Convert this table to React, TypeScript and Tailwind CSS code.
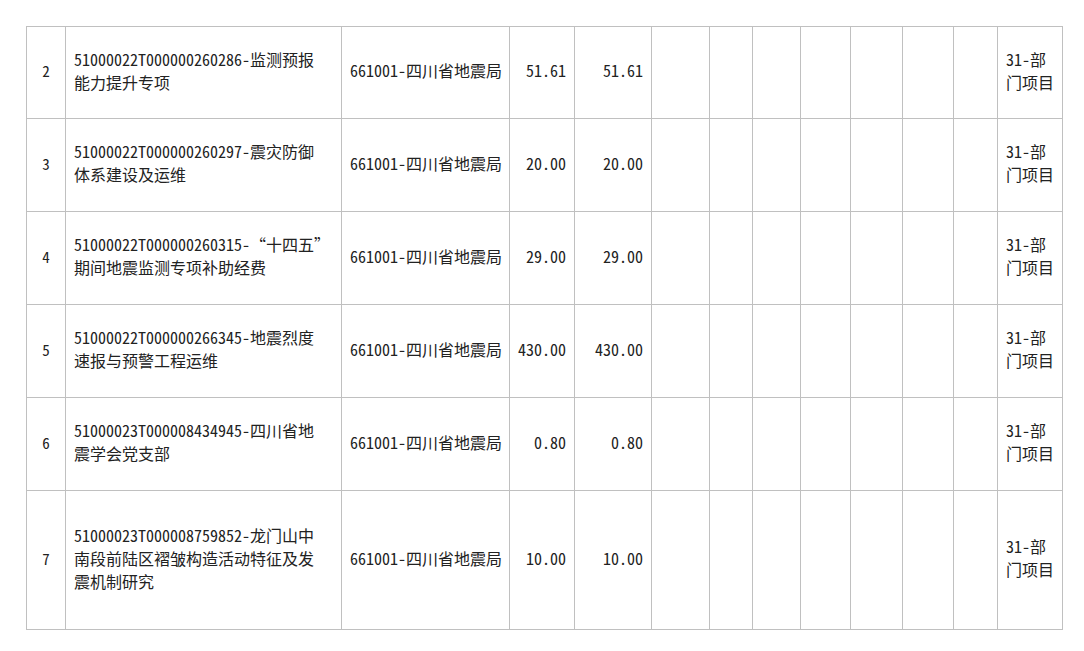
import React from "react";

type Row = {
  no: string;
  name: string[];
  unit: string;
  a: string;
  b: string;
  h: string;
};

const rows: Row[] = [
  { no: "2", name: ["51000022T000000260286-监测预报", "能力提升专项"], unit: "661001-四川省地震局", a: "51.61", b: "51.61", h: "h-[92px]" },
  { no: "3", name: ["51000022T000000260297-震灾防御", "体系建设及运维"], unit: "661001-四川省地震局", a: "20.00", b: "20.00", h: "h-[93px]" },
  { no: "4", name: ["51000022T000000260315-“十四五”", "期间地震监测专项补助经费"], unit: "661001-四川省地震局", a: "29.00", b: "29.00", h: "h-[93px]" },
  { no: "5", name: ["51000022T000000266345-地震烈度", "速报与预警工程运维"], unit: "661001-四川省地震局", a: "430.00", b: "430.00", h: "h-[93px]" },
  { no: "6", name: ["51000023T000008434945-四川省地", "震学会党支部"], unit: "661001-四川省地震局", a: "0.80", b: "0.80", h: "h-[93px]" },
  { no: "7", name: ["51000023T000008759852-龙门山中", "南段前陆区褶皱构造活动特征及发", "震机制研究"], unit: "661001-四川省地震局", a: "10.00", b: "10.00", h: "h-[139px]" },
];

const cell = "border border-[#c0c0c0] align-middle pt-0 pb-[4px]";

export default function App() {
  return (
    <div
      className="bg-white w-[1084px] h-[651px] pt-[26px] pl-[26px] text-[16px] leading-[23px] text-[#222]"
      style={{ fontFamily: '"Noto Sans Mono CJK SC", "Noto Sans CJK SC", sans-serif' }}
    >
      <table className="table-fixed border-collapse w-[1037px]">
        <colgroup>
          <col className="w-[39px]" />
          <col className="w-[276px]" />
          <col className="w-[168px]" />
          <col className="w-[65px]" />
          <col className="w-[77px]" />
          <col className="w-[58px]" />
          <col className="w-[43px]" />
          <col className="w-[48px]" />
          <col className="w-[50px]" />
          <col className="w-[52px]" />
          <col className="w-[51px]" />
          <col className="w-[44px]" />
          <col className="w-[65px]" />
        </colgroup>
        <tbody>
          {rows.map((r) => (
            <tr key={r.no} className={r.h}>
              <td className={`${cell} px-0 text-center text-[15px]`}>{r.no}</td>
              <td className={`${cell} pl-[8px] pr-0 whitespace-nowrap`}>
                {r.name.map((l, i) => (
                  <div key={i}>{l}</div>
                ))}
              </td>
              <td className={`${cell} pl-[8px] pr-0 whitespace-nowrap`}>{r.unit}</td>
              <td className={`${cell} pl-0 text-right pr-[8px]`}>{r.a}</td>
              <td className={`${cell} pl-0 text-right pr-[8px]`}>{r.b}</td>
              <td className={cell}></td>
              <td className={cell}></td>
              <td className={cell}></td>
              <td className={cell}></td>
              <td className={cell}></td>
              <td className={cell}></td>
              <td className={cell}></td>
              <td className={`${cell} pl-[8px] pr-0 whitespace-nowrap`}>
                <div>31-部</div>
                <div>门项目</div>
              </td>
            </tr>
          ))}
        </tbody>
      </table>
    </div>
  );
}
